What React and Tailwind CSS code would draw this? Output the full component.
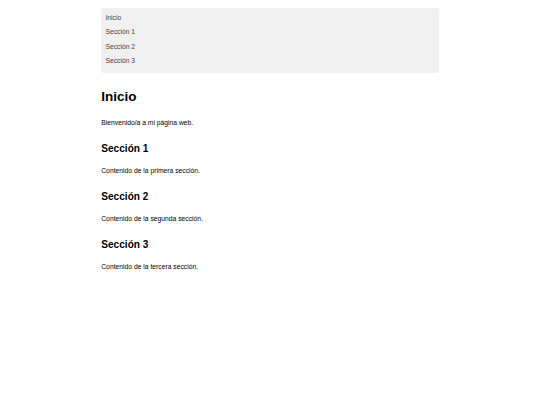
import React from 'react';

const links = ['Inicio', 'Sección 1', 'Sección 2', 'Sección 3'];

const sections = [
  { title: 'Sección 1', text: 'Contenido de la primera sección.' },
  { title: 'Sección 2', text: 'Contenido de la segunda sección.' },
  { title: 'Sección 3', text: 'Contenido de la tercera sección.' },
];

export default function App() {
  return (
    <div className="min-h-screen bg-white font-['Liberation_Sans',Arial,sans-serif] text-black">
      <div className="mx-auto w-[337.5px] pt-[8px]">
        {/* Navigation */}
        <nav className="rounded-[3px] bg-[#f0f0f0] px-[4.2px] pt-[3px] pb-[5px]">
          <ul>
            {links.map(l => (
              <li key={l} className="text-[6.75px] leading-[14.35px] text-[#444]">
                {l}
              </li>
            ))}
          </ul>
        </nav>

        <main>
          <section>
            <h1 className="mt-[15.6px] text-[13.5px] leading-[15.5px] font-bold">Inicio</h1>
            <p className="mt-[15px] text-[6.75px] leading-[7.8px]">Bienvenido/a a mi página web.</p>
          </section>

          {sections.map((s, i) => (
            <section key={s.title} className={i === 0 ? 'mt-[16px]' : 'mt-[16px]'}>
              <h2 className="text-[10.1px] leading-[11.6px] font-bold">{s.title}</h2>
              <p className="mt-[12.4px] text-[6.75px] leading-[7.8px]">{s.text}</p>
            </section>
          ))}
        </main>
      </div>
    </div>
  );
}
